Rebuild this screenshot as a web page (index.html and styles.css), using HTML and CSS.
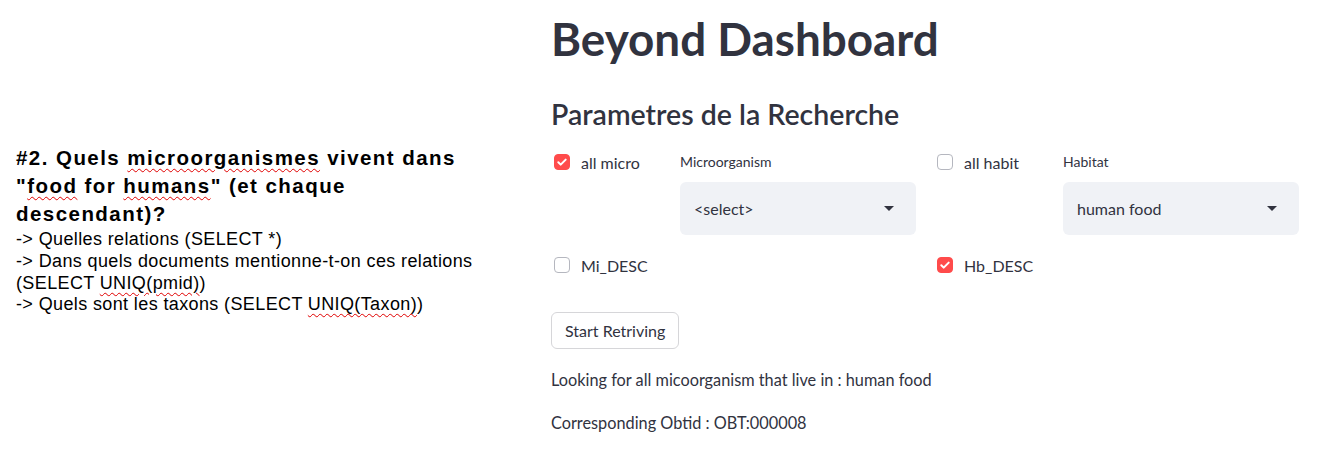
FILE: index.html
```html
<!DOCTYPE html>
<html lang="fr">
<head>
<meta charset="utf-8">
<title>Beyond Dashboard</title>
<link rel="stylesheet" href="styles.css">
</head>
<body>
<div class="page">
  <section class="doc">
    <p class="q">#2. Quels <span class="sp">microorganismes</span> vivent dans<br>"<span class="sp">food</span> for <span class="sp">humans</span>" (et chaque<br>descendant)?</p>
    <p class="lines">-&gt; Quelles relations (SELECT *)<br>-&gt; Dans quels documents mentionne-t-on ces relations<br>(SELECT <span class="sp">UNIQ(pmid)</span>)<br>-&gt; Quels sont les taxons (SELECT <span class="sp">UNIQ(Taxon)</span>)</p>
  </section>
  <main class="app">
    <h1 class="title">Beyond Dashboard</h1>
    <h2 class="subtitle">Parametres de la Recherche</h2>
    <div class="grid">
      <div class="col">
        <label class="cb"><span class="box on"><svg viewBox="0 0 16 16" width="16" height="16"><path d="M4.3 8.2l2.4 2.4 5-5" fill="none" stroke="#fff" stroke-width="2" stroke-linecap="round" stroke-linejoin="round"/></svg></span>all micro</label>
        <label class="cb cb2"><span class="box"></span>Mi_DESC</label>
      </div>
      <div class="col">
        <div class="lbl">Microorganism</div>
        <div class="sel"><span>&lt;select&gt;</span><span class="caret"></span></div>
      </div>
      <div class="col">
        <label class="cb"><span class="box"></span>all habit</label>
        <label class="cb cb2"><span class="box on"><svg viewBox="0 0 16 16" width="16" height="16"><path d="M4.3 8.2l2.4 2.4 5-5" fill="none" stroke="#fff" stroke-width="2" stroke-linecap="round" stroke-linejoin="round"/></svg></span>Hb_DESC</label>
      </div>
      <div class="col">
        <div class="lbl">Habitat</div>
        <div class="sel"><span>human food</span><span class="caret"></span></div>
      </div>
    </div>
    <button class="btn" type="button">Start Retriving</button>
    <p class="txt">Looking for all micoorganism that live in : human food</p>
    <p class="txt">Corresponding Obtid : OBT:000008</p>
  </main>
</div>
</body>
</html>
```
FILE: styles.css
```css
* { box-sizing: border-box; }
html, body { margin: 0; padding: 0; background: #fff; }
.page {
  display: flex;
  width: 1328px;
  height: 469px;
  overflow: hidden;
}
.doc {
  width: 551px;
  flex: none;
  padding: 144px 0 0 16px;
  font-family: "Liberation Sans", Arial, sans-serif;
  color: #000;
}
.doc p { margin: 0; white-space: nowrap; }
.q {
  font-weight: 700;
  font-size: 20.5px;
  line-height: 28px;
  letter-spacing: 1.45px;
}
.lines {
  margin-top: 1px !important;
  font-size: 18px;
  line-height: 21.8px;
  letter-spacing: 0.38px;
}
.sp {
  text-decoration: underline wavy #e00000;
  text-decoration-thickness: 1px;
  text-underline-offset: 3px;
}
.app {
  flex: 1;
  padding-right: 29px;
  font-family: Lato, "Noto Sans", sans-serif;
  color: #31333f;
}
.title {
  margin: 10px 0 0;
  font-size: 45.8px;
  line-height: 58px;
  font-weight: 700;
}
.subtitle {
  margin: 28px 0 0;
  font-size: 28.5px;
  line-height: 36px;
  font-weight: 600;
}
.grid {
  display: grid;
  grid-template-columns: 129px 254px 129px 236px;
  margin-top: 18px;
}
.col { display: flex; flex-direction: column; }
.cb {
  display: flex;
  align-items: center;
  gap: 11px;
  height: 24px;
  padding-left: 3px;
  font-size: 16px;
}
.cb2 { margin-top: 79px; }
.box {
  width: 16px;
  height: 16px;
  border: 1px solid #b5b7bf;
  border-radius: 4px;
  flex: none;
  display: flex;
}
.box.on { background: #ff4b4b; border-color: #ff4b4b; }
.box.on svg { margin: -1px; }
.lbl {
  font-size: 14px;
  height: 24px;
  line-height: 24px;
}
.sel {
  width: 236px;
  margin-top: 8px;
  height: 53px;
  background: #f0f2f6;
  border-radius: 6px;
  display: flex;
  align-items: center;
  justify-content: space-between;
  padding: 0 22px 0 14px;
  font-size: 16px;
}
.caret {
  width: 0; height: 0;
  border-left: 5px solid transparent;
  border-right: 5px solid transparent;
  border-top: 5px solid #31333f;
}
.btn {
  display: block;
  margin-top: 35px;
  height: 37px;
  padding: 0 13px;
  background: #fff;
  border: 1px solid #d6d6d9;
  border-radius: 6px;
  font-family: inherit;
  font-size: 16px;
  color: #31333f;
}
.txt {
  margin: 19px 0 0;
  font-size: 16.3px;
  line-height: 24px;
}
```
